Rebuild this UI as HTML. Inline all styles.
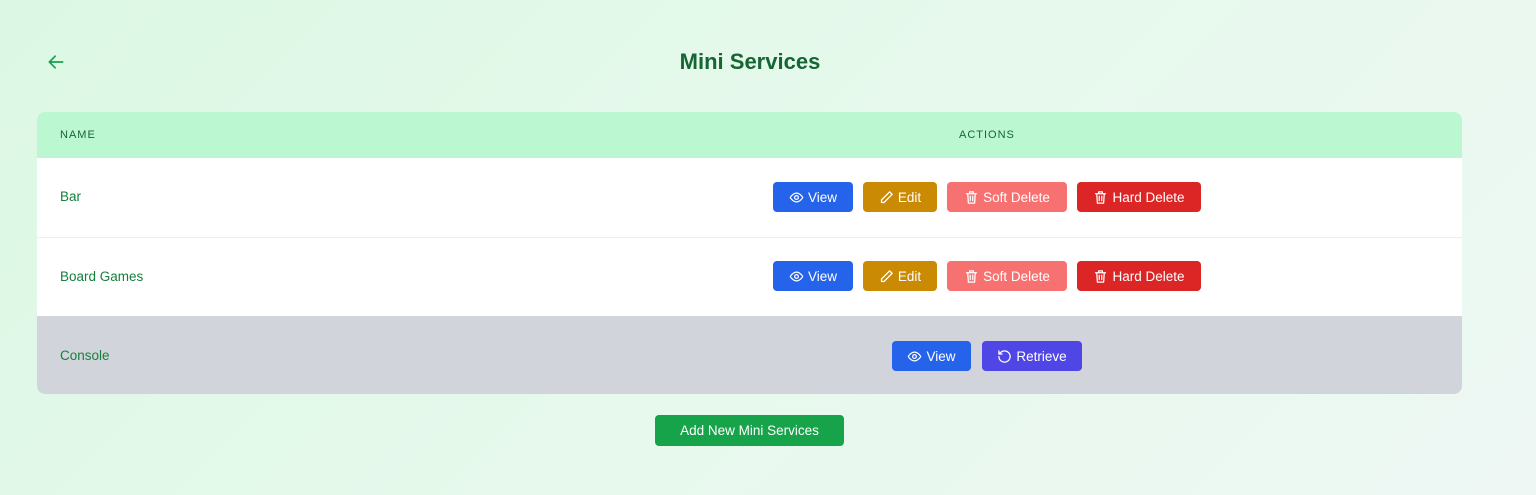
<!DOCTYPE html>
<html><head><style>
body{margin:0;width:1536px;height:495px;background:linear-gradient(135deg,#dcf8e4,#e6f9ec 50%,#eef7f4);font-family:"Liberation Sans",sans-serif;position:relative;overflow:hidden}
.a{position:absolute}
h1{position:absolute;left:0;width:1500px;top:49px;margin:0;text-align:center;font-size:22px;color:#166534;font-weight:bold}
.tbl{position:absolute;left:37px;top:112px;width:1425px;height:282px;border-radius:8px;overflow:hidden;background:#fff}
.hd{position:absolute;left:0;top:0;width:100%;height:46px;background:#bbf7d0;color:#166534;font-size:11px;letter-spacing:1px}
.row{position:absolute;left:0;width:100%;color:#15803d;font-size:13.5px;border-top:1px solid #e5f3ec}
.btn{position:absolute;height:30px;border-radius:4px;color:#fff;font-size:13.5px;display:flex;align-items:center;justify-content:center;gap:4px;box-sizing:border-box}
.bl{background:#2563eb}.yl{background:#ca8a04}.pk{background:#f87171}.rd{background:#dc2626}.pu{background:#4f46e5}
svg{width:15px;height:15px;fill:none;stroke:#fff;stroke-width:2;stroke-linecap:round;stroke-linejoin:round}
</style></head><body>
<svg class="a" style="left:46px;top:52px;width:20px;height:20px;stroke:#16a34a" viewBox="0 0 24 24"><path d="M20 12H4M11 19l-7-7 7-7"/></svg>
<h1>Mini Services</h1>
<div class="tbl">
<div class="hd"><span class="a" style="left:23px;top:17px">NAME</span><span class="a" style="left:922px;top:17px">ACTIONS</span></div>
<div class="row" style="top:46px;height:79px;border:0"><span class="a" style="left:23px;top:31px">Bar</span></div>
<div class="row" style="top:125px;height:79px"><span class="a" style="left:23px;top:31px">Board Games</span></div>
<div class="row" style="top:204px;height:78px;background:#d1d5db;border:0"><span class="a" style="left:23px;top:32px">Console</span></div>
</div>
<div class="btn bl" style="left:773px;top:182px;width:80px"><svg viewBox="0 0 24 24"><path d="M2 12s4-7 10-7 10 7 10 7-4 7-10 7S2 12 2 12z"/><circle cx="12" cy="12" r="3"/></svg>View</div>
<div class="btn yl" style="left:863px;top:182px;width:74px"><svg viewBox="0 0 24 24"><path d="M17 3l4 4L8 20H4v-4z"/></svg>Edit</div>
<div class="btn pk" style="left:947px;top:182px;width:120px"><svg viewBox="0 0 24 24"><path d="M4 6h16M9 6V3h6v3M6 6l1 15h10l1-15M10 10v7M14 10v7"/></svg>Soft Delete</div>
<div class="btn rd" style="left:1077px;top:182px;width:124px"><svg viewBox="0 0 24 24"><path d="M4 6h16M9 6V3h6v3M6 6l1 15h10l1-15M10 10v7M14 10v7"/></svg>Hard Delete</div>
<div class="btn bl" style="left:773px;top:261px;width:80px"><svg viewBox="0 0 24 24"><path d="M2 12s4-7 10-7 10 7 10 7-4 7-10 7S2 12 2 12z"/><circle cx="12" cy="12" r="3"/></svg>View</div>
<div class="btn yl" style="left:863px;top:261px;width:74px"><svg viewBox="0 0 24 24"><path d="M17 3l4 4L8 20H4v-4z"/></svg>Edit</div>
<div class="btn pk" style="left:947px;top:261px;width:120px"><svg viewBox="0 0 24 24"><path d="M4 6h16M9 6V3h6v3M6 6l1 15h10l1-15M10 10v7M14 10v7"/></svg>Soft Delete</div>
<div class="btn rd" style="left:1077px;top:261px;width:124px"><svg viewBox="0 0 24 24"><path d="M4 6h16M9 6V3h6v3M6 6l1 15h10l1-15M10 10v7M14 10v7"/></svg>Hard Delete</div>
<div class="btn bl" style="left:892px;top:341px;width:79px"><svg viewBox="0 0 24 24"><path d="M2 12s4-7 10-7 10 7 10 7-4 7-10 7S2 12 2 12z"/><circle cx="12" cy="12" r="3"/></svg>View</div>
<div class="btn pu" style="left:982px;top:341px;width:100px"><svg viewBox="0 0 24 24"><path d="M3 12a9 9 0 1 0 3-6.7L3 8M3 3v5h5"/></svg>Retrieve</div>
<div class="btn" style="left:655px;top:415px;width:189px;height:31px;background:#16a34a">Add New Mini Services</div>
</body></html>
